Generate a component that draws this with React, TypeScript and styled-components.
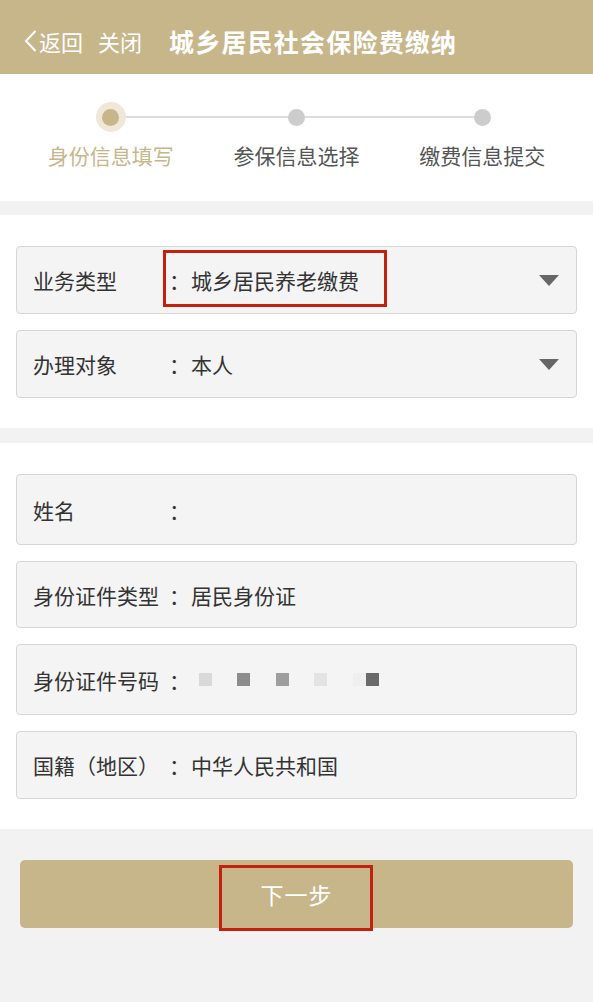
import React from 'react'
import styled, { createGlobalStyle } from 'styled-components'

const GlobalStyle = createGlobalStyle`
  body {
    margin: 0;
    background: #f2f2f2;
    font-family: "Noto Sans CJK SC", "Noto Sans", sans-serif;
  }
`

const Page = styled.div`
  width: 593px;
  min-height: 1002px;
  background: #f2f2f2;
`

const Header = styled.div`
  height: 74px;
  box-sizing: border-box;
  padding: 8px 0 0 24px;
  background: #c8b68b;
  display: flex;
  align-items: center;
  color: #fff;
`

const Back = styled.div`
  display: flex;
  align-items: center;
  gap: 2px;
  font-size: 22px;
  margin-right: 15px;
`

const Close = styled.div`
  font-size: 22px;
  margin-right: 27px;
`

const Title = styled.h1`
  margin: 0;
  font-size: 25px;
  font-weight: 700;
  letter-spacing: 1.2px;
`

const StepSection = styled.div`
  height: 127px;
  box-sizing: border-box;
  background: #fff;
  padding: 28px 18px 0;
`

const Track = styled.div`
  position: relative;
  display: grid;
  grid-template-columns: repeat(3, 1fr);

  &::before {
    content: '';
    position: absolute;
    top: 14px;
    left: 93px;
    right: 93px;
    height: 2px;
    background: #dcdcdc;
  }
`

const Step = styled.div`
  display: flex;
  flex-direction: column;
  align-items: center;
  position: relative;
`

const Dot = styled.span<{ $active?: boolean }>`
  width: 30px;
  height: 30px;
  border-radius: 50%;
  background: ${p => (p.$active ? '#efe8d8' : 'transparent')};
  display: flex;
  align-items: center;
  justify-content: center;

  &::after {
    content: '';
    width: 17px;
    height: 17px;
    border-radius: 50%;
    background: ${p => (p.$active ? '#c8b68b' : '#cccccc')};
  }
`

const StepLabel = styled.div<{ $active?: boolean }>`
  margin-top: 8px;
  font-size: 21px;
  line-height: 30px;
  color: ${p => (p.$active ? '#c8b68b' : '#555')};
`

const Section = styled.div<{ $gapTop: number; $bottom: number }>`
  background: #fff;
  margin-top: ${p => p.$gapTop}px;
  padding: 31px 16px ${p => p.$bottom}px;
  display: flex;
  flex-direction: column;
  gap: 16px;
`

const Field = styled.div<{ $h: number }>`
  position: relative;
  height: ${p => p.$h}px;
  box-sizing: border-box;
  background: #f4f4f4;
  border: 1px solid #d6d6d6;
  border-radius: 4px;
  display: flex;
  align-items: center;
  padding: 0 17px 0 16px;
  font-size: 21px;
  color: #333;
`

const Label = styled.span`
  width: 130px;
  flex-shrink: 0;
  white-space: nowrap;
`

const Colon = styled.span`
  width: 21px;
  padding-left: 6px;
  margin-right: 1px;
`

const Value = styled.span`
  flex: 1;
  white-space: nowrap;
`

const Caret = styled.span`
  width: 0;
  height: 0;
  border-left: 10px solid transparent;
  border-right: 10px solid transparent;
  border-top: 11px solid #666;
`

const Masked = styled.span`
  display: flex;
  align-items: center;
  margin-left: 8px;
`

const Pixel = styled.span<{ $c: string; $gap: number }>`
  width: 13px;
  height: 13px;
  background: ${p => p.$c};
  margin-right: ${p => p.$gap}px;
`

const Mark = styled.span<{ $l: number; $t: number; $w: number; $h: number }>`
  position: absolute;
  left: ${p => p.$l}px;
  top: ${p => p.$t}px;
  width: ${p => p.$w}px;
  height: ${p => p.$h}px;
  box-sizing: border-box;
  border: 3px solid #c3200e;
  pointer-events: none;
`

const Footer = styled.div`
  padding: 31px 20px 0;
`

const NextButton = styled.button`
  position: relative;
  width: 100%;
  height: 68px;
  border: none;
  border-radius: 5px;
  background: #c8b68b;
  color: #fff;
  font-family: inherit;
  font-size: 23px;
  letter-spacing: 1px;
`

const steps = ['身份信息填写', '参保信息选择', '缴费信息提交']

const pixels = [
  { c: '#d9d9d9', g: 25 },
  { c: '#8c8c8c', g: 26 },
  { c: '#9e9e9e', g: 25 },
  { c: '#e3e3e3', g: 26 },
  { c: '#efefef', g: 0 },
  { c: '#6a6a6a', g: 0 },
]

export default function App() {
  return (
    <Page>
      <GlobalStyle />
      <Header>
        <Back>
          <svg width="13" height="22" viewBox="0 0 13 22">
            <polyline points="11.5,1 2,11 11.5,21" fill="none" stroke="#fff" strokeWidth="2" />
          </svg>
          返回
        </Back>
        <Close>关闭</Close>
        <Title>城乡居民社会保险费缴纳</Title>
      </Header>

      <StepSection>
        <Track>
          {steps.map((s, i) => (
            <Step key={s}>
              <Dot $active={i === 0} />
              <StepLabel $active={i === 0}>{s}</StepLabel>
            </Step>
          ))}
        </Track>
      </StepSection>

      <Section $gapTop={14} $bottom={30}>
        <Field $h={68}>
          <Label>业务类型</Label>
          <Colon>：</Colon>
          <Value>城乡居民养老缴费</Value>
          <Caret />
          <Mark $l={146} $t={3} $w={224} $h={57} />
        </Field>
        <Field $h={68}>
          <Label>办理对象</Label>
          <Colon>：</Colon>
          <Value>本人</Value>
          <Caret />
        </Field>
      </Section>

      <Section $gapTop={15} $bottom={30}>
        <Field $h={71}>
          <Label>姓名</Label>
          <Colon>：</Colon>
          <Value />
        </Field>
        <Field $h={67}>
          <Label>身份证件类型</Label>
          <Colon>：</Colon>
          <Value>居民身份证</Value>
        </Field>
        <Field $h={71}>
          <Label>身份证件号码</Label>
          <Colon>：</Colon>
          <Masked>
            {pixels.map((p, i) => (
              <Pixel key={i} $c={p.c} $gap={p.g} />
            ))}
          </Masked>
        </Field>
        <Field $h={68}>
          <Label>国籍（地区）</Label>
          <Colon>：</Colon>
          <Value>中华人民共和国</Value>
        </Field>
      </Section>

      <Footer>
        <NextButton>
          下一步
          <Mark $l={199} $t={5} $w={154} $h={66} />
        </NextButton>
      </Footer>
    </Page>
  )
}
